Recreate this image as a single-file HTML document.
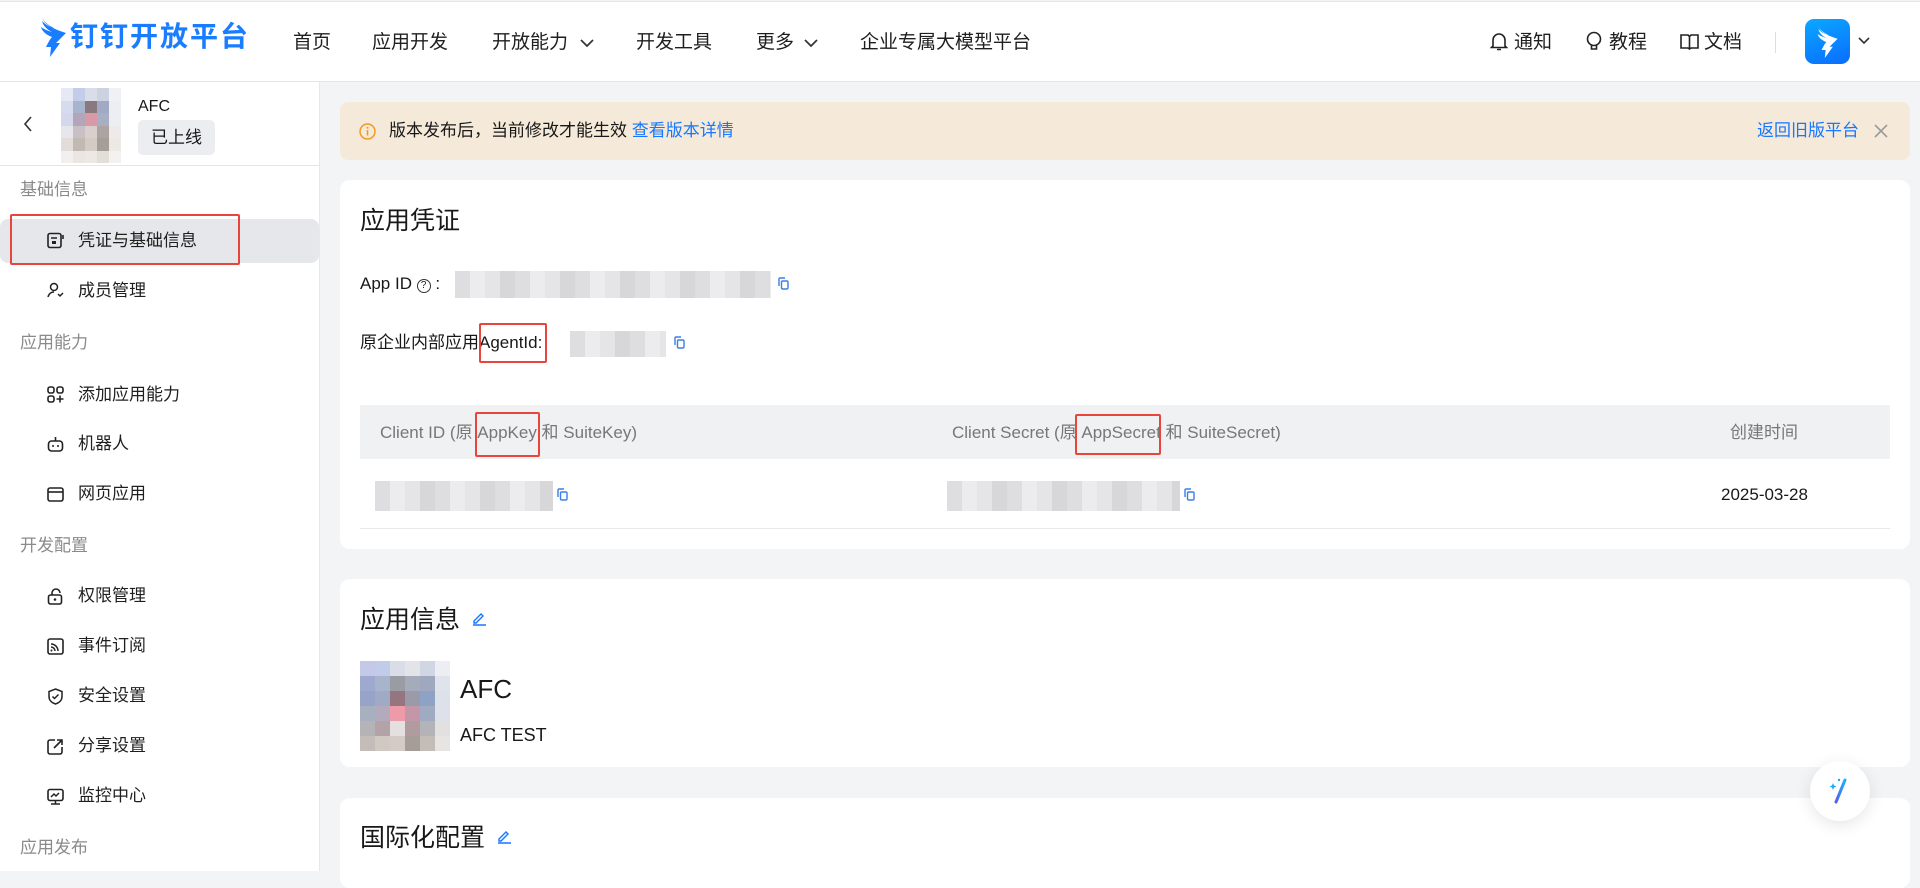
<!DOCTYPE html>
<html><head><meta charset="utf-8">
<style>
*{margin:0;padding:0;box-sizing:border-box}
body{width:1920px;height:871px;overflow:hidden;background:#f3f4f6;font-family:"Liberation Sans","Noto Sans CJK SC",sans-serif;color:#181818;position:relative}
.a{position:absolute;white-space:nowrap}
.hdr{position:absolute;left:0;top:1px;width:1920px;height:81px;background:#fff;border-top:1px solid #e5e5e5;border-bottom:1px solid #e6e6e6}
.nav{font-size:19px;top:30px;line-height:26px;color:#1f1f1f}
.side{position:absolute;left:0;top:82px;width:320px;height:789px;background:#fff;border-right:1px solid #e8e8e8}
.sec{font-size:17px;color:#8a8a8a;left:20px;line-height:22px}
.it{font-size:17px;color:#1f1f1f;left:78px;line-height:22px}
.ic{position:absolute;left:47px;width:17px;height:17px}
.card{position:absolute;left:340px;width:1570px;background:#fff;border-radius:10px}
.blur{position:absolute;background:
 repeating-linear-gradient(90deg,rgba(0,0,0,.06) 0 15px,rgba(0,0,0,0) 15px 30px,rgba(0,0,0,.03) 30px 45px,rgba(0,0,0,.09) 45px 60px),#ececee}
.cp{position:absolute;width:11px;height:13px}
.red{position:absolute;border:2px solid #e8453c;border-radius:2px}
.mos{position:absolute;display:grid;grid-template-columns:repeat(6,1fr);grid-template-rows:repeat(6,1fr)}
</style></head><body>

<div class="hdr"></div>
<svg class="a" style="left:40px;top:17px" width="28" height="40" viewBox="0 0 28 40"><path d="M2 0 C4 8 14 12 26 16 L16 26 L20 26 L10 40 L11 30 L6 30 C8 26 10 22 12 20 C6 18 2 14 1 10 C5 13 9 14 12 15 C6 12 3 8 2 4 C6 8 10 10 14 11 C8 8 3 4 2 0Z" fill="#1a7cff"/></svg>
<div class="a" style="left:70px;top:19px;font-size:28px;line-height:36px;font-weight:bold;color:#1a7cff;letter-spacing:2px">钉钉开放平台</div>
<div class="a nav" style="left:293px">首页</div>
<div class="a nav" style="left:372px">应用开发</div>
<div class="a nav" style="left:492px">开放能力</div>
<svg class="a" style="left:580px;top:39px" width="14" height="9" viewBox="0 0 14 9"><path d="M1 1l6 6 6-6" fill="none" stroke="#333" stroke-width="1.7"/></svg>
<div class="a nav" style="left:636px">开发工具</div>
<div class="a nav" style="left:756px">更多</div>
<svg class="a" style="left:804px;top:39px" width="14" height="9" viewBox="0 0 14 9"><path d="M1 1l6 6 6-6" fill="none" stroke="#333" stroke-width="1.7"/></svg>
<div class="a nav" style="left:860px">企业专属大模型平台</div>
<svg class="a" style="left:1490px;top:32px" width="18" height="20" viewBox="0 0 18 20"><path d="M3 14 V8 a6 6 0 0 1 12 0 V14 L16.5 15.5 H1.5Z M7 17.5 h4" fill="none" stroke="#222" stroke-width="1.6"/></svg>
<div class="a nav" style="left:1514px">通知</div>
<svg class="a" style="left:1585px;top:31px" width="18" height="21" viewBox="0 0 18 21"><circle cx="9" cy="8" r="6.5" fill="none" stroke="#222" stroke-width="1.6"/><path d="M6.5 14v4h5v-4" fill="none" stroke="#222" stroke-width="1.6"/></svg>
<div class="a nav" style="left:1609px">教程</div>
<svg class="a" style="left:1680px;top:33px" width="19" height="17" viewBox="0 0 19 17"><path d="M1 2h7l1.5 1.5L11 2h7v13h-7l-1.5 1-1.5-1H1Z M9.5 3.5v12" fill="none" stroke="#222" stroke-width="1.6"/></svg>
<div class="a nav" style="left:1704px">文档</div>
<div class="a" style="left:1775px;top:32px;width:1px;height:21px;background:#ddd"></div>
<div class="a" style="left:1805px;top:19px;width:45px;height:45px;border-radius:9px;background:linear-gradient(160deg,#0aa8ff,#0a6cff)"></div>
<svg class="a" style="left:1816px;top:26px" width="24" height="32" viewBox="0 0 28 40"><path d="M2 0 C4 8 14 12 26 16 L16 26 L20 26 L10 40 L11 30 L6 30 C8 26 10 22 12 20 C6 18 2 14 1 10 C5 13 9 14 12 15 C6 12 3 8 2 4 C6 8 10 10 14 11 C8 8 3 4 2 0Z" fill="#fff"/></svg>
<svg class="a" style="left:1858px;top:37px" width="12" height="8" viewBox="0 0 12 8"><path d="M1 1l5 5 5-5" fill="none" stroke="#333" stroke-width="1.6"/></svg>

<div class="side"></div>
<svg class="a" style="left:23px;top:116px" width="10" height="16" viewBox="0 0 10 16"><path d="M8 1L2 8l6 7" fill="none" stroke="#333" stroke-width="1.6"/></svg>
<div class="mos" style="left:61px;top:88px;width:72px;height:75px">
<i style="background:#e6e8f5"></i><i style="background:#c3cce8"></i><i style="background:#d8dde8"></i><i style="background:#ccd2e0"></i><i style="background:#f0f1f5"></i><i style="background:#fff"></i>
<i style="background:#d6dbee"></i><i style="background:#a8b3cc"></i><i style="background:#897880"></i><i style="background:#a0aac4"></i><i style="background:#eceef3"></i><i style="background:#fff"></i>
<i style="background:#d4d8ea"></i><i style="background:#b3a6ba"></i><i style="background:#d99aa8"></i><i style="background:#a8afc4"></i><i style="background:#eceef3"></i><i style="background:#fff"></i>
<i style="background:#e6e6ec"></i><i style="background:#c8c0c4"></i><i style="background:#d8d0cc"></i><i style="background:#aca4a0"></i><i style="background:#eeeaea"></i><i style="background:#fff"></i>
<i style="background:#e4dcd8"></i><i style="background:#c2b8b4"></i><i style="background:#d4cbc4"></i><i style="background:#a59e98"></i><i style="background:#ece8e4"></i><i style="background:#fff"></i>
<i style="background:#f2f0ee"></i><i style="background:#ebe6e2"></i><i style="background:#ece8e4"></i><i style="background:#e2ded8"></i><i style="background:#f4f2f0"></i><i style="background:#fff"></i>
</div>
<div class="a" style="left:138px;top:97px;font-size:16px;line-height:20px">AFC</div>
<div class="a" style="left:138px;top:120px;width:77px;height:35px;background:#ebedf0;border-radius:5px;font-size:17px;line-height:35px;text-align:center">已上线</div>
<div class="a" style="left:0;top:165px;width:320px;height:1px;background:#e5e5e5"></div>

<div class="a sec" style="top:179px">基础信息</div>
<div class="a" style="left:0;top:219px;width:319px;height:44px;background:#e6e7ea;border-radius:8px"></div>
<div class="red" style="left:10px;top:214px;width:230px;height:51px"></div>
<svg class="ic" style="top:232px" viewBox="0 0 17 17"><rect x="1" y="1.5" width="13" height="14" rx="2" fill="none" stroke="#222" stroke-width="1.6"/><path d="M4 6h6M16 3v4" stroke="#222" stroke-width="1.6"/><rect x="5" y="9" width="4" height="3" fill="#222"/></svg>
<div class="a it" style="top:230px">凭证与基础信息</div>
<svg class="ic" style="top:282px" viewBox="0 0 17 17"><circle cx="7" cy="5" r="3.5" fill="none" stroke="#222" stroke-width="1.5"/><path d="M1 15c1-4 4-5 6-5 M11 12l2 2 3-3" fill="none" stroke="#222" stroke-width="1.5"/></svg>
<div class="a it" style="top:280px">成员管理</div>
<div class="a sec" style="top:332px">应用能力</div>
<svg class="ic" style="top:386px" viewBox="0 0 17 17"><rect x="1" y="1" width="6" height="6" rx="2" fill="none" stroke="#222" stroke-width="1.6"/><rect x="10" y="1" width="6" height="6" rx="2" fill="none" stroke="#222" stroke-width="1.6"/><rect x="1" y="10" width="6" height="6" rx="2" fill="none" stroke="#222" stroke-width="1.6"/><path d="M13 9.5v7M9.5 13h7" stroke="#222" stroke-width="1.6"/></svg>
<div class="a it" style="top:384px">添加应用能力</div>
<svg class="ic" style="top:436px" viewBox="0 0 17 17"><rect x="1.5" y="5" width="14" height="10" rx="3" fill="none" stroke="#222" stroke-width="1.6"/><path d="M8.5 1v4" stroke="#222" stroke-width="1.6"/><circle cx="6" cy="10" r="1" fill="#222"/><circle cx="11" cy="10" r="1" fill="#222"/></svg>
<div class="a it" style="top:433px">机器人</div>
<svg class="ic" style="top:486px" viewBox="0 0 17 17"><rect x="1" y="2" width="15" height="13" rx="2" fill="none" stroke="#222" stroke-width="1.6"/><path d="M1 6h15" stroke="#222" stroke-width="1.6"/></svg>
<div class="a it" style="top:483px">网页应用</div>
<div class="a sec" style="top:535px">开发配置</div>
<svg class="ic" style="top:588px" viewBox="0 0 17 17"><rect x="1.5" y="7" width="13" height="9" rx="2" fill="none" stroke="#222" stroke-width="1.6"/><path d="M5 7V5a4 4 0 0 1 8 0" fill="none" stroke="#222" stroke-width="1.6"/><circle cx="8" cy="11.5" r="1.3" fill="#222"/></svg>
<div class="a it" style="top:585px">权限管理</div>
<svg class="ic" style="top:638px" viewBox="0 0 17 17"><rect x="1" y="1" width="15" height="15" rx="2" fill="none" stroke="#222" stroke-width="1.6"/><path d="M4 6a7 7 0 0 1 7 7M4 9a4 4 0 0 1 4 4" fill="none" stroke="#222" stroke-width="1.5"/><circle cx="4.5" cy="12.5" r="1" fill="#222"/></svg>
<div class="a it" style="top:635px">事件订阅</div>
<svg class="ic" style="top:688px" viewBox="0 0 17 17"><path d="M8.5 1L15 3.5v5c0 4-3 6.5-6.5 7.5C5 15 2 12.5 2 8.5v-5Z M5.5 8.5l2 2 4-4" fill="none" stroke="#222" stroke-width="1.5"/></svg>
<div class="a it" style="top:685px">安全设置</div>
<svg class="ic" style="top:738px" viewBox="0 0 17 17"><path d="M8 2H3a2 2 0 0 0-2 2v10a2 2 0 0 0 2 2h10a2 2 0 0 0 2-2V9 M7 10l8-8M10 2h5v5" fill="none" stroke="#222" stroke-width="1.6"/></svg>
<div class="a it" style="top:735px">分享设置</div>
<svg class="ic" style="top:788px" viewBox="0 0 17 17"><rect x="1" y="1.5" width="15" height="11" rx="2" fill="none" stroke="#222" stroke-width="1.6"/><path d="M4 9l3-3 2 2 3-3 M8.5 12.5v3M4 16h9" fill="none" stroke="#222" stroke-width="1.5"/></svg>
<div class="a it" style="top:785px">监控中心</div>
<div class="a sec" style="top:837px">应用发布</div>

<div class="a" style="left:340px;top:102px;width:1570px;height:58px;background:#f5eada;border-radius:8px"></div>
<svg class="a" style="left:359px;top:123px" width="17" height="17" viewBox="0 0 17 17"><circle cx="8.5" cy="8.5" r="7.5" fill="none" stroke="#f29a1f" stroke-width="1.5"/><path d="M8.5 7v5.5" stroke="#f29a1f" stroke-width="1.6"/><circle cx="8.5" cy="4.7" r="1" fill="#f29a1f"/></svg>
<div class="a" style="left:389px;top:120px;font-size:17px;line-height:22px">版本发布后，当前修改才能生效 <span style="color:#1677ff">查看版本详情</span></div>
<div class="a" style="left:1757px;top:120px;font-size:17px;line-height:22px;color:#1677ff">返回旧版平台</div>
<svg class="a" style="left:1874px;top:124px" width="14" height="14" viewBox="0 0 14 14"><path d="M1 1l12 12M13 1L1 13" stroke="#999" stroke-width="1.6"/></svg>

<div class="card" style="top:180px;height:369px"></div>
<div class="a" style="left:360px;top:206px;font-size:25px;line-height:30px">应用凭证</div>
<div class="a" style="left:360px;top:273px;font-size:17px;line-height:22px">App ID <span style="display:inline-block;width:14px;height:14px;border:1.3px solid #333;border-radius:50%;font-size:10px;line-height:12px;text-align:center;vertical-align:1px">?</span> :</div>
<div class="blur" style="left:455px;top:271px;width:316px;height:27px"></div>
<svg class="cp" style="left:778px;top:277px" viewBox="0 0 11 13"><rect x="3.5" y="4" width="6.5" height="8" rx="1.2" fill="none" stroke="#3a7ee6" stroke-width="1.4"/><path d="M1 9V2a1 1 0 0 1 1-1h5" fill="none" stroke="#3a7ee6" stroke-width="1.4"/></svg>
<div class="a" style="left:360px;top:332px;font-size:17px;line-height:22px">原企业内部应用AgentId:</div>
<div class="red" style="left:479px;top:323px;width:68px;height:40px"></div>
<div class="blur" style="left:570px;top:331px;width:96px;height:26px"></div>
<svg class="cp" style="left:674px;top:336px" viewBox="0 0 11 13"><rect x="3.5" y="4" width="6.5" height="8" rx="1.2" fill="none" stroke="#3a7ee6" stroke-width="1.4"/><path d="M1 9V2a1 1 0 0 1 1-1h5" fill="none" stroke="#3a7ee6" stroke-width="1.4"/></svg>

<div class="a" style="left:360px;top:405px;width:1530px;height:54px;background:#f0f1f3"></div>
<div class="a" style="left:380px;top:422px;font-size:17px;line-height:22px;color:#777">Client ID (原 AppKey 和 SuiteKey)</div>
<div class="red" style="left:475px;top:412px;width:65px;height:45px"></div>
<div class="a" style="left:952px;top:422px;font-size:17px;line-height:22px;color:#777">Client Secret (原 AppSecret 和 SuiteSecret)</div>
<div class="red" style="left:1075px;top:414px;width:86px;height:41px"></div>
<div class="a" style="left:1730px;top:422px;font-size:17px;line-height:22px;color:#777">创建时间</div>
<div class="blur" style="left:375px;top:481px;width:178px;height:30px"></div>
<svg class="cp" style="left:557px;top:488px" viewBox="0 0 11 13"><rect x="3.5" y="4" width="6.5" height="8" rx="1.2" fill="none" stroke="#3a7ee6" stroke-width="1.4"/><path d="M1 9V2a1 1 0 0 1 1-1h5" fill="none" stroke="#3a7ee6" stroke-width="1.4"/></svg>
<div class="blur" style="left:947px;top:481px;width:233px;height:30px"></div>
<svg class="cp" style="left:1184px;top:488px" viewBox="0 0 11 13"><rect x="3.5" y="4" width="6.5" height="8" rx="1.2" fill="none" stroke="#3a7ee6" stroke-width="1.4"/><path d="M1 9V2a1 1 0 0 1 1-1h5" fill="none" stroke="#3a7ee6" stroke-width="1.4"/></svg>
<div class="a" style="left:1721px;top:484px;font-size:17px;line-height:22px">2025-03-28</div>
<div class="a" style="left:360px;top:528px;width:1530px;height:1px;background:#e8e8e8"></div>

<div class="card" style="top:579px;height:188px"></div>
<div class="a" style="left:360px;top:605px;font-size:25px;line-height:30px">应用信息</div>
<svg class="a" style="left:472px;top:611px" width="15" height="15" viewBox="0 0 15 15"><path d="M2 10l7-7 2 2-7 7H2Z M1 14h13" fill="none" stroke="#1677ff" stroke-width="1.4"/></svg>
<div class="mos" style="left:360px;top:661px;width:90px;height:90px">
<i style="background:#c3c9e6"></i><i style="background:#c0cce9"></i><i style="background:#d8dde8"></i><i style="background:#e2e4e8"></i><i style="background:#d0d6e3"></i><i style="background:#eceef3"></i>
<i style="background:#9fa9d0"></i><i style="background:#a8b3cc"></i><i style="background:#9a9ca4"></i><i style="background:#a4acbc"></i><i style="background:#a0a8c0"></i><i style="background:#dfe3ec"></i>
<i style="background:#97a3c8"></i><i style="background:#a0aac4"></i><i style="background:#957580"></i><i style="background:#9a9aa8"></i><i style="background:#8ea2c6"></i><i style="background:#dde1ea"></i>
<i style="background:#a8afbe"></i><i style="background:#b3aabd"></i><i style="background:#ee9aa8"></i><i style="background:#c497a8"></i><i style="background:#a0aac0"></i><i style="background:#dee1ea"></i>
<i style="background:#b4b3b8"></i><i style="background:#b3a3a6"></i><i style="background:#e4e0e0"></i><i style="background:#b09ca0"></i><i style="background:#b3b3b8"></i><i style="background:#e3e1e0"></i>
<i style="background:#c4bcb8"></i><i style="background:#d0c8c2"></i><i style="background:#d4cbc4"></i><i style="background:#a59e98"></i><i style="background:#c4bcb6"></i><i style="background:#e8e4e2"></i>
</div>
<div class="a" style="left:460px;top:674px;font-size:26px;line-height:30px">AFC</div>
<div class="a" style="left:460px;top:724px;font-size:18px;line-height:22px">AFC TEST</div>

<div class="card" style="top:798px;height:90px"></div>
<div class="a" style="left:360px;top:823px;font-size:25px;line-height:30px">国际化配置</div>
<svg class="a" style="left:497px;top:829px" width="15" height="15" viewBox="0 0 15 15"><path d="M2 10l7-7 2 2-7 7H2Z M1 14h13" fill="none" stroke="#1677ff" stroke-width="1.4"/></svg>

<div class="a" style="left:1810px;top:761px;width:60px;height:60px;border-radius:50%;background:#fff;box-shadow:0 4px 16px rgba(0,0,0,.1)"></div>
<svg class="a" style="left:1825px;top:776px" width="30" height="30" viewBox="0 0 30 30"><defs><linearGradient id="g" x1="0" y1="0" x2="0" y2="1"><stop offset="0" stop-color="#19b4ff"/><stop offset="1" stop-color="#5a5cf0"/></linearGradient></defs><path d="M20 4L11 26" stroke="url(#g)" stroke-width="3" stroke-linecap="round"/><path d="M8 7l1 2.5 2.5 1-2.5 1-1 2.5-1-2.5-2.5-1 2.5-1Z" fill="#19a8ff"/><circle cx="14" cy="4" r="1.2" fill="#19a8ff"/></svg>
</body></html>
